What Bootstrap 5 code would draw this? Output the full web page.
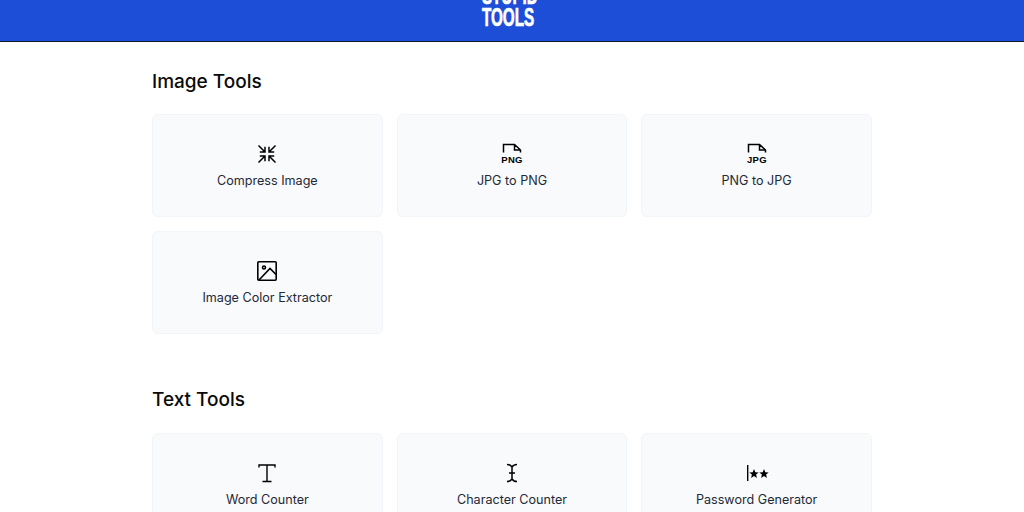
<!DOCTYPE html>
<html lang="en">
<head>
    <meta charset="UTF-8">
    <title>Stupid Tools</title>
    <link href="https://cdn.jsdelivr.net/npm/bootstrap@5.3.0/dist/css/bootstrap.min.css" rel="stylesheet">
    <style>
        body {
            font-family: "Inter", "Noto Sans", sans-serif;
            background: #fff;
            height: 512px;
            overflow: hidden;
        }
        .site-header {
            height: 42px;
            background: #1d4ed8;
            border-bottom: 1px solid #0f172a;
            overflow: hidden;
        }
        .logo-text {
            font-family: "Liberation Sans", sans-serif;
            font-weight: 700;
            font-size: 25px;
            line-height: 22px;
            color: #fff;
            text-align: left;
            -webkit-text-stroke: .7px #fff;
            transform: scaleX(.61);
            margin-right: 5px;
            margin-bottom: 13px;
        }
        .page-wrap {
            width: 720px;
        }
        .tool-section {
            margin-top: 24px;
        }
        .tool-section + .tool-section {
            margin-top: 50px;
        }
        .section-title {
            font-size: 19px;
            font-weight: 500;
            line-height: 30px;
            color: #0a0a0a;
            padding-top: 1px;
            margin-bottom: 17px;
        }
        .tool-section + .tool-section .section-title {
            margin-bottom: 18px;
        }
        .tool-row {
            --bs-gutter-x: 14px;
            --bs-gutter-y: 14px;
        }
        .tool-card {
            height: 103px;
            padding-top: 1px;
            background: #f8fafc;
            border: 1px solid #f1f5f9;
            border-radius: 6px;
        }
        .tool-icon {
            display: block;
            width: 24px;
            height: 24px;
            color: #000;
            margin-bottom: 5px;
        }
        .icon-label {
            font-family: "Liberation Sans", sans-serif;
            font-weight: 700;
            font-size: 9.5px;
            letter-spacing: .3px;
            fill: #000;
        }
        .tool-name {
            font-size: 12.6px;
            line-height: 20px;
            color: #1f2937;
        }
    </style>
</head>
<body>
    <header class="site-header d-flex flex-column justify-content-end align-items-center">
        <div class="logo-text">STUPID<br>TOOLS</div>
    </header>

    <main class="page-wrap mx-auto">
        <section class="tool-section">
            <h2 class="section-title">Image Tools</h2>
            <div class="row row-cols-3 tool-row">
                <div class="col">
                    <div class="card tool-card align-items-center justify-content-center">
                        <svg class="tool-icon" viewBox="0 0 24 24" fill="none" stroke="currentColor" stroke-width="1.5">
                            <path d="M3.500 3.500l6.500 6.500M4.800 10h5.200V4.800M20.500 3.500L14 10M19.200 10H14V4.800M3.500 20.500L10 14M4.800 14h5.200v5.200M20.500 20.500L14 14M19.200 14H14v5.200"/>
                        </svg>
                        <div class="tool-name">Compress Image</div>
                    </div>
                </div>
                <div class="col">
                    <div class="card tool-card align-items-center justify-content-center">
                        <svg class="tool-icon" viewBox="0 0 24 24" fill="none" stroke="currentColor" stroke-width="1.5">
                            <path d="M3.500 10.500V2.500H14.500L20.500 8V10.500M14.500 2.500V8H20.500"/>
                            <text class="icon-label" x="12" y="20.500" text-anchor="middle" stroke="none">PNG</text>
                        </svg>
                        <div class="tool-name">JPG to PNG</div>
                    </div>
                </div>
                <div class="col">
                    <div class="card tool-card align-items-center justify-content-center">
                        <svg class="tool-icon" viewBox="0 0 24 24" fill="none" stroke="currentColor" stroke-width="1.5">
                            <path d="M3.500 10.500V2.500H14.500L20.500 8V10.500M14.500 2.500V8H20.500"/>
                            <text class="icon-label" x="12" y="20.500" text-anchor="middle" stroke="none">JPG</text>
                        </svg>
                        <div class="tool-name">PNG to JPG</div>
                    </div>
                </div>
                <div class="col">
                    <div class="card tool-card align-items-center justify-content-center">
                        <svg class="tool-icon" viewBox="0 0 24 24" fill="none" stroke="currentColor" stroke-width="1.6">
                            <rect x="2.800" y="2.800" width="18.400" height="18.400" rx="1"/>
                            <circle cx="9" cy="8.500" r="1.500"/>
                            <path d="M4 21L15 9.500L21 15.500"/>
                        </svg>
                        <div class="tool-name">Image Color Extractor</div>
                    </div>
                </div>
            </div>
        </section>

        <section class="tool-section">
            <h2 class="section-title">Text Tools</h2>
            <div class="row row-cols-3 tool-row">
                <div class="col">
                    <div class="card tool-card align-items-center justify-content-center">
                        <svg class="tool-icon" viewBox="0 0 24 24" fill="none" stroke="currentColor" stroke-width="1.4">
                            <path d="M4 6.500V4H20V6.500M12 4V20.500M7.500 20.500H16.500"/>
                        </svg>
                        <div class="tool-name">Word Counter</div>
                    </div>
                </div>
                <div class="col">
                    <div class="card tool-card align-items-center justify-content-center">
                        <svg class="tool-icon" viewBox="0 0 24 24" fill="none" stroke="currentColor" stroke-width="1.5">
                            <path d="M7 3.500C9.500 3.500 11 4.500 12 6C13 4.500 14.500 3.500 17 3.500M12 6V18M7 20.500C9.500 20.500 11 19.500 12 18C13 19.500 14.500 20.500 17 20.500M9 12H15"/>
                        </svg>
                        <div class="tool-name">Character Counter</div>
                    </div>
                </div>
                <div class="col">
                    <div class="card tool-card align-items-center justify-content-center">
                        <svg class="tool-icon" viewBox="0 0 24 24" fill="currentColor">
                            <path d="M2 4h1.400v16H2z"/>
                            <polygon points="9,8 10.300,11.200 13.700,11.400 11.100,13.600 11.900,17 9,15.100 6.100,17 6.900,13.600 4.300,11.400 7.700,11.200"/>
                            <polygon points="19,8 20.300,11.200 23.700,11.400 21.100,13.600 21.900,17 19,15.100 16.100,17 16.900,13.600 14.300,11.400 17.700,11.200"/>
                        </svg>
                        <div class="tool-name">Password Generator</div>
                    </div>
                </div>
            </div>
        </section>
    </main>

    <script src="https://cdn.jsdelivr.net/npm/bootstrap@5.3.0/dist/js/bootstrap.bundle.min.js"></script>
</body>
</html>
